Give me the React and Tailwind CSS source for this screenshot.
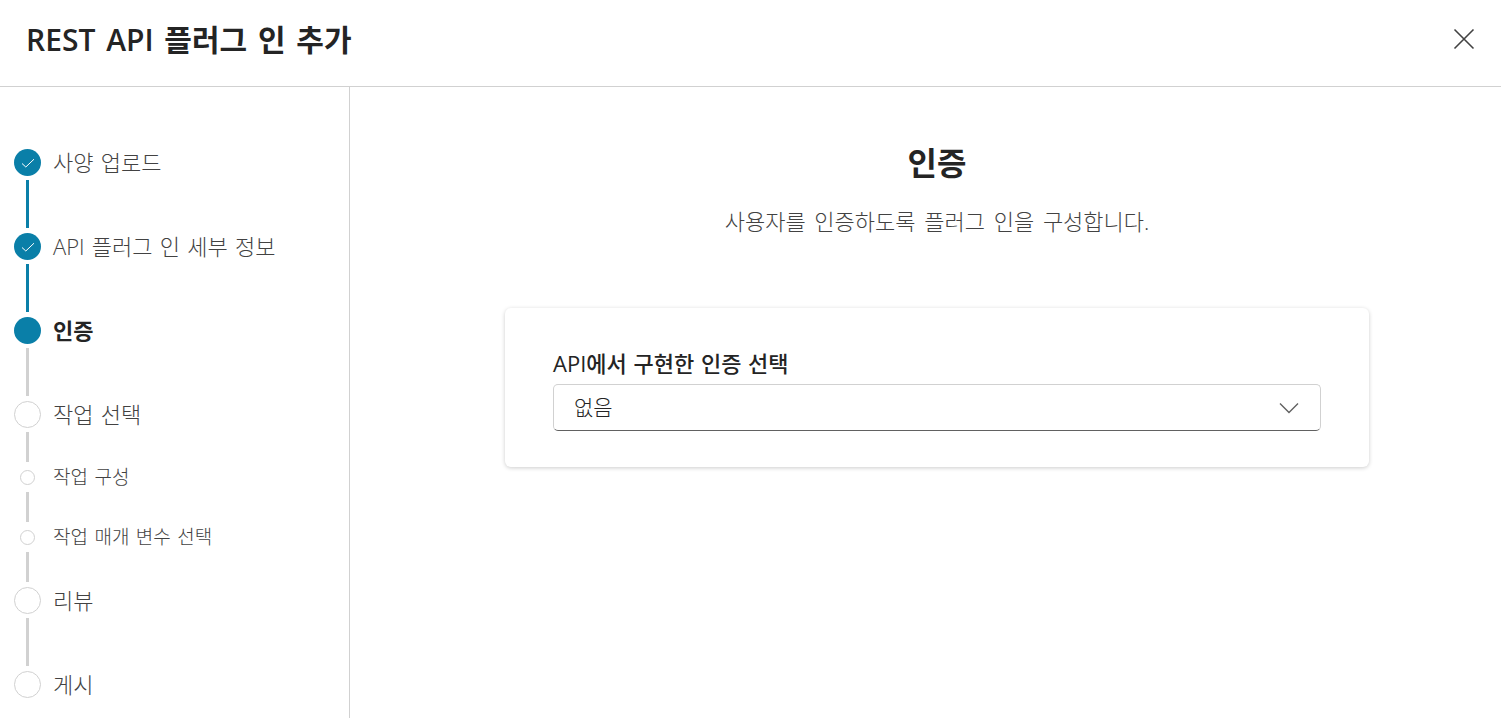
import * as React from 'react';

const fontStack = { fontFamily: '"Open Sans", "Noto Sans CJK KR", sans-serif' };

// gap classes are written per connector because the spacing differs between big and small steps
const steps = [
  { label: '사양 업로드', state: 'done', line: 'done', lineClass: 'h-12 mt-1 mb-[5px]' },
  { label: 'API 플러그 인 세부 정보', state: 'done', line: 'done', lineClass: 'h-12 mt-1 mb-[5px]' },
  { label: '인증', state: 'current', line: 'todo', lineClass: 'h-12 mt-1 mb-[5px]' },
  { label: '작업 선택', state: 'todo', line: 'todo', lineClass: 'h-[30px] mt-1 mb-2' },
  { label: '작업 구성', state: 'todo', small: true, line: 'todo', lineClass: 'h-[30px] mt-[7px] mb-2' },
  { label: '작업 매개 변수 선택', state: 'todo', small: true, line: 'todo', lineClass: 'h-[30px] mt-[7px] mb-[5px]' },
  { label: '리뷰', state: 'todo', line: 'todo', lineClass: 'h-12 mt-1 mb-[5px]' },
  { label: '게시', state: 'todo' },
];

const StepDot = ({ state, small }) => {
  if (small) {
    return <div className="w-[15px] h-[15px] rounded-full border border-[#d1d1d1] bg-white" />;
  }
  if (state === 'todo') {
    return <div className="w-[27px] h-[27px] rounded-full border border-[#d1d1d1] bg-white" />;
  }
  return (
    <div className="w-[27px] h-[27px] rounded-full bg-[#0a7fa8] flex items-center justify-center">
      {state === 'done' && (
        <svg width="14" height="14" viewBox="0 0 14 14" fill="none" stroke="white" strokeWidth="1">
          <path d="M1 7.5L4.8 11L13 3.2" />
        </svg>
      )}
    </div>
  );
};

const Stepper = () => (
  <div className="flex flex-col pt-[62px] pl-[14px]">
    {steps.map((step) => (
      <div key={step.label} className="flex flex-col">
        <div className={step.small ? 'flex items-center h-[15px]' : 'flex items-center h-[27px]'}>
          <div className="w-[27px] flex justify-center shrink-0">
            <StepDot state={step.state} small={step.small} />
          </div>
          <span
            className={
              step.small
                ? 'ml-3 text-[19px] font-light text-[#424242] whitespace-nowrap [word-spacing:1.5px]'
                : step.state === 'current'
                  ? 'ml-3 text-[22px] font-semibold text-[#242424] whitespace-nowrap'
                  : 'ml-3 text-[22px] font-light text-[#424242] whitespace-nowrap [word-spacing:1.5px]'
            }
          >
            {step.label}
          </span>
        </div>
        {step.line && (
          <div className="w-[27px] flex justify-center">
            <div
              className={`w-[3px] ${step.lineClass} ${step.line === 'done' ? 'bg-[#0a7fa8]' : 'bg-[#d1d1d1]'}`}
            />
          </div>
        )}
      </div>
    ))}
  </div>
);

export default function App() {
  return (
    <div className="h-screen flex flex-col bg-white overflow-hidden" style={fontStack}>
      {/* Header */}
      <header className="h-[87px] shrink-0 border-b border-[#d1d1d1] flex items-center justify-between pl-[26px] pr-[26px] pb-2">
        <h1 className="text-[30px] font-semibold text-[#242424] [word-spacing:3px]">REST API 플러그 인 추가</h1>
        <svg width="22" height="22" viewBox="0 0 22 22" fill="none" stroke="#424242" strokeWidth="1.6">
          <path d="M1.5 1.5L20.5 20.5M20.5 1.5L1.5 20.5" />
        </svg>
      </header>

      <div className="flex flex-1 min-h-0">
        {/* Sidebar */}
        <aside className="w-[350px] shrink-0 border-r border-[#d1d1d1]">
          <Stepper />
        </aside>

        {/* Main */}
        <main className="flex-1 pl-[155px]">
          <div className="w-[864px]">
            <h2 className="mt-[52px] text-center text-[32px] font-semibold text-[#242424] leading-[48px]">인증</h2>
            <p className="mt-[19px] text-center text-[22px] font-light text-[#424242] leading-[30px] [word-spacing:3px]">
              사용자를 인증하도록 플러그 인을 구성합니다.
            </p>

            <div className="mt-[72px] h-[159px] rounded-md bg-white shadow-[0_1px_4px_rgba(0,0,0,0.2)] px-12 pt-[39px]">
              <label className="block text-[22px] font-medium text-[#242424] leading-[32px] [word-spacing:1px]">
                API에서 구현한 인증 선택
              </label>
              <div className="mt-[5px] h-[47px] rounded-[5px] border border-[#d1d1d1] border-b-[#616161] flex items-center justify-between pl-5 pr-[21px]">
                <span className="text-[21px] font-light text-[#242424]">없음</span>
                <svg width="20" height="12" viewBox="0 0 20 12" fill="none" stroke="#616161" strokeWidth="1.4">
                  <path d="M1 1.5L10 10.5L19 1.5" />
                </svg>
              </div>
            </div>
          </div>
        </main>
      </div>
    </div>
  );
}
